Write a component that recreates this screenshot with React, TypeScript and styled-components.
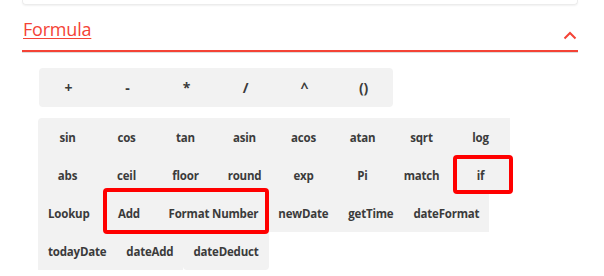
import React from "react";
import styled, { createGlobalStyle } from "styled-components";

const Global = createGlobalStyle`
  html, body { margin: 0; padding: 0; background: #fff; }
  body { font-family: "Open Sans", "Liberation Sans", sans-serif; }
`;

const RED = "#f44336";

const Page = styled.div`
  width: 604px;
  height: 276px;
  overflow: hidden;
  padding: 0 26px 0 22px;
  box-sizing: border-box;
`;

const PrevCard = styled.div`
  height: 4px;
  border: 1px solid #ececec;
  border-top: none;
  border-radius: 0 0 4px 4px;
  box-shadow: 0 1px 2px rgba(0, 0, 0, 0.06);
`;

const Header = styled.div`
  display: flex;
  align-items: center;
  justify-content: space-between;
  height: 45px;
  border-bottom: 2px solid ${RED};
  box-shadow: 0 1px 0 #dcdcdc;
`;

const Title = styled.span`
  color: ${RED};
  font-size: 18px;
  font-weight: 400;
  letter-spacing: -0.2px;
  text-decoration: underline;
  text-underline-offset: 2px;
  text-decoration-thickness: 1px;
  margin-left: 1px;
  margin-top: 2px;
`;

const Chevron = styled.svg`
  width: 14px;
  height: 9px;
  margin-top: 16px;
  margin-right: 1px;
`;

const Body = styled.div`
  padding: 16px 0 0 16px;
  display: flex;
  flex-direction: column;
  gap: 11px;
`;

const OperatorBar = styled.div`
  display: flex;
  width: max-content;
  margin-left: 1px;
  background: #f2f2f2;
  border-radius: 4px;
`;

const Btn = styled.div<{ $w?: number }>`
  box-sizing: border-box;
  min-width: ${(p) => p.$w ?? 59}px;
  height: 38px;
  padding: 0 10px;
  display: flex;
  align-items: center;
  justify-content: center;
  background: #f2f2f2;
  color: #3b3b3b;
  font-size: 11.5px;
  letter-spacing: -0.2px;
  font-weight: 700;
  white-space: nowrap;
`;

const OpBtn = styled(Btn)`
  height: 39px;
  font-size: 14px;
  background: transparent;
`;

const Grid = styled.div`
  display: flex;
  flex-wrap: wrap;
  width: 475px;
  & > *:first-child { border-top-left-radius: 4px; }
  & > *:last-child { border-bottom-right-radius: 4px; border-bottom-left-radius: 4px; }
`;

const Mark = styled.div<{ $t: number; $r: number; $b: number; $l: number }>`
  position: relative;
  display: flex;
  &::after {
    content: "";
    position: absolute;
    top: ${(p) => p.$t}px;
    right: ${(p) => p.$r}px;
    bottom: ${(p) => p.$b}px;
    left: ${(p) => p.$l}px;
    border: 4px solid #ff0000;
    border-radius: 4px;
    pointer-events: none;
  }
`;

const ops = ["+", "-", "*", "/", "^", "()"];

export default function App() {
  return (
    <>
      <Global />
      <Page>
        <PrevCard />
        <Header>
          <Title>Formula</Title>
          <Chevron viewBox="0 0 14 9">
            <path d="M1.5 7.5 L7 2 L12.5 7.5" fill="none" stroke={RED} strokeWidth="2" />
          </Chevron>
        </Header>
        <Body>
          <OperatorBar>
            {ops.map((o) => (
              <OpBtn key={o}>{o}</OpBtn>
            ))}
          </OperatorBar>
          <Grid>
            {["sin", "cos", "tan", "asin", "acos", "atan", "sqrt", "log"].map((f) => (
              <Btn key={f}>{f}</Btn>
            ))}
            {["abs", "ceil", "floor", "round", "exp", "Pi", "match"].map((f) => (
              <Btn key={f}>{f}</Btn>
            ))}
            <Mark $t={-1} $r={-3} $b={0} $l={2}>
              <Btn>if</Btn>
            </Mark>
            <Btn>Lookup</Btn>
            <Mark $t={-6} $r={-1} $b={-2} $l={3}>
              <Btn>Add</Btn>
              <Btn>Format Number</Btn>
            </Mark>
            <Btn>newDate</Btn>
            <Btn>getTime</Btn>
            <Btn>dateFormat</Btn>
            <Btn>todayDate</Btn>
            <Btn>dateAdd</Btn>
            <Btn>dateDeduct</Btn>
          </Grid>
        </Body>
      </Page>
    </>
  );
}
